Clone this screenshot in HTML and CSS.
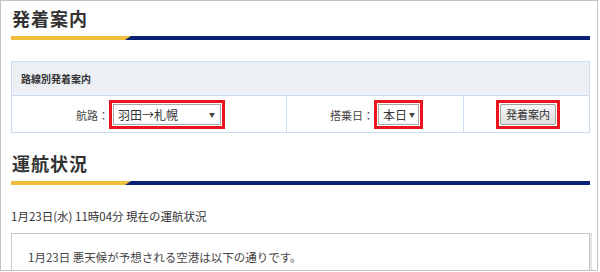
FILE: index.html
```html
<!DOCTYPE html>
<html lang="ja">
<head>
    <meta charset="UTF-8">
    <title>発着案内</title>
    <link rel="stylesheet" href="styles.css">
</head>
<body>
    <div class="frame">
        <h2 class="section-title">発着案内</h2>
        <div class="title-bar"></div>

        <table class="route-table">
            <colgroup>
                <col class="col-route">
                <col class="col-date">
                <col>
            </colgroup>
            <tr>
                <th colspan="3">路線別発着案内</th>
            </tr>
            <tr>
                <td class="cell-route">
                    <span class="label">航路：</span><span class="mark">
                        <span class="fake-select select-route">羽田→札幌<span class="arrow">▼</span></span>
                    </span>
                </td>
                <td class="cell-date">
                    <span class="label">搭乗日：</span><span class="mark">
                        <span class="fake-select select-date">本日<span class="arrow">▼</span></span>
                    </span>
                </td>
                <td class="cell-btn">
                    <span class="mark">
                        <button class="btn">発着案内</button>
                    </span>
                </td>
            </tr>
        </table>

        <h2 class="section-title second">運航状況</h2>
        <div class="title-bar"></div>

        <p class="status-time">1月23日(水) 11時04分 現在の運航状況</p>

        <div class="notice">
            1月23日 悪天候が予想される空港は以下の通りです。
        </div>
    </div>
</body>
</html>
```

FILE: styles.css
```css
body {
    margin: 0;
    padding: 0;
    background-color: #fff;
    font-family: "Noto Sans CJK JP", "Noto Sans", sans-serif;
    color: #333;
}
.frame {
    width: 598px;
    height: 271px;
    box-sizing: border-box;
    border: 1px solid #c4c4c4;
    padding: 0 7px 0 10px;
    overflow: hidden;
}
.section-title {
    margin: 4px 0 0 1px;
    font-size: 18px;
    line-height: 26px;
    letter-spacing: 1px;
    font-weight: bold;
    color: #333;
}
.section-title.second {
    margin-top: 17px;
}
.title-bar {
    position: relative;
    height: 4px;
    margin-top: 5px;
    background-color: #0a2178;
}
.title-bar::before {
    content: "";
    position: absolute;
    left: 0;
    top: 0;
    width: 120px;
    height: 4px;
    background-color: #f0bd3c;
    clip-path: polygon(0 0, 120px 0, 114px 4px, 0 4px);
}
.route-table {
    width: 579px;
    table-layout: fixed;
    margin-top: 21px;
    border-collapse: collapse;
    font-size: 12px;
}
.col-route {
    width: 275px;
}
.col-date {
    width: 177px;
}
.route-table th {
    height: 33px;
    padding: 0 0 0 9px;
    text-align: left;
    font-size: 10px;
    font-weight: bold;
    background-color: #ecf0f4;
    border: 1px solid #c9dcf0;
}
.route-table td {
    height: 36px;
    padding: 0;
    border: 1px solid #c9dcf0;
    vertical-align: middle;
}
.cell-route,
.cell-date {
    text-align: right;
}
.cell-btn {
    text-align: center;
}
.label {
    color: #444;
    font-size: 11px;
    vertical-align: middle;
}
.mark {
    display: inline-block;
    vertical-align: middle;
    border: 3px solid #e8141e;
}
.cell-route .mark {
    margin-right: 61px;
}
.cell-date .mark {
    margin-right: 40px;
}
.cell-btn .mark {
    margin-left: 3px;
}
.fake-select {
    display: flex;
    align-items: center;
    justify-content: space-between;
    box-sizing: border-box;
    height: 21px;
    margin: 1px;
    padding: 0 5px 0 4px;
    border: 1px solid #a9a9a9;
    background-color: #fff;
    font-size: 12px;
    color: #333;
    text-align: left;
    white-space: nowrap;
}
.select-route {
    width: 108px;
}
.select-date {
    width: 41px;
    padding: 0 3px 0 4px;
}
.arrow {
    font-size: 6px;
    color: #444;
}
.btn {
    display: block;
    box-sizing: border-box;
    width: 56px;
    margin: 1px;
    height: 21px;
    padding: 0;
    font-family: "Noto Sans CJK JP", sans-serif;
    font-size: 11px;
    color: #333;
    border: 1px solid #a0a0a0;
    border-radius: 2px;
    background: linear-gradient(#f7f7f7, #dddddd);
}
.status-time {
    margin: 22px 0 0 0;
    font-size: 11.5px;
    line-height: 18px;
    color: #333;
}
.notice {
    margin-top: 8px;
    border: 1px solid #c8c8c8;
    box-shadow: 2px 0 0 #e4e4e4;
    padding: 14px 16px 20px 16px;
    font-size: 11.5px;
    line-height: 18px;
    color: #444;
}
```
